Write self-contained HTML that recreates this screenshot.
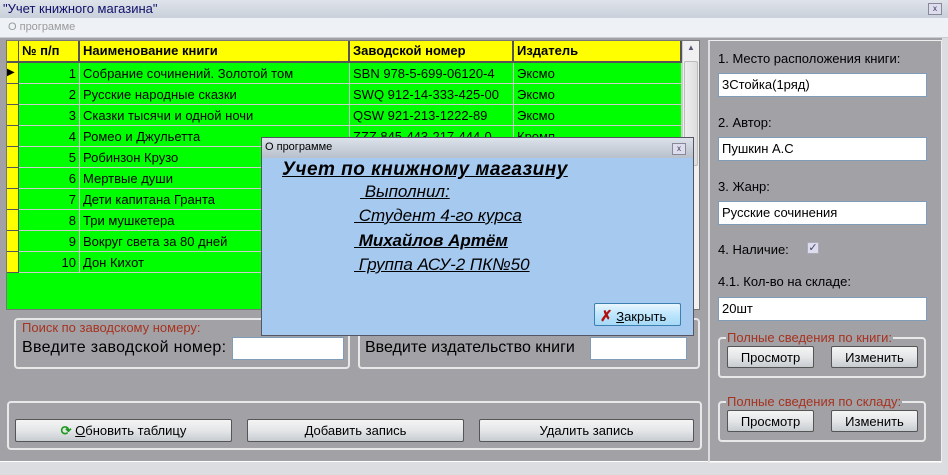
<!DOCTYPE html>
<html><head><meta charset="utf-8"><style>
*{margin:0;padding:0;box-sizing:border-box}
body{width:948px;height:475px;position:relative;overflow:hidden;background:#a2a1a6;font-family:"Liberation Sans",sans-serif;font-size:13px;color:#000}
.a{position:absolute}
.title{left:0;top:0;width:948px;height:18px;background:linear-gradient(#dfe3ea,#c9d0da);color:#10106a;font-size:13px;padding:1px 3px}
.menu{left:0;top:18px;width:948px;height:20px;background:#eef1f6;color:#9a9a9a;font-size:11px;padding:3px 8px;border-bottom:1px solid #c8ccd3}
.grid{left:6px;top:40px;width:694px;height:270px;background:#00ff00;border:1px solid #777}
.hdr{background:#ffff00;font-weight:bold;font-size:13px;border-right:2px solid #555;border-bottom:2px solid #555;height:22px;padding:2px 3px}
.cell{height:21px;border-right:1px solid #ccc;border-bottom:1px solid #ccc;padding:3px 3px;font-size:13px;white-space:nowrap;overflow:hidden}
.ind{background:#ffff00;border-right:1px solid #555;border-bottom:1px solid #555;height:21px}
.gb{border:2px solid #e8e8e8;border-radius:4px}
.leg{color:#a63320;font-size:13px;background:#a2a1a6;padding:0 1px}
.inp{background:#fff;border:1px solid #7f9db9;height:24px;padding:3px 3px;font-size:13px}
.btn{border:1px solid #555;border-radius:2px;background:linear-gradient(#f4f4f4,#e4e6e8 50%,#c7ccd1);text-align:center;font-size:13px;padding-top:3px}
.dl{font-size:17px;font-style:italic;text-decoration:underline;white-space:nowrap}
</style></head><body>
<div class="a title">"Учет книжного магазина"</div>
<div class="a" style="left:928px;top:3px;width:14px;height:12px;border:1px solid #889;background:#dde;font-size:8px;text-align:center;color:#335;line-height:10px">x</div>
<div class="a menu">О программе</div>

<div class="a grid">
 <div class="a" style="left:0;top:0;width:12px;height:22px;background:#ffff00;border-right:1px solid #555;border-bottom:2px solid #555"></div>
 <div class="a hdr" style="left:12px;top:0;width:61px">№ п/п</div>
 <div class="a hdr" style="left:73px;top:0;width:270px">Наименование книги</div>
 <div class="a hdr" style="left:343px;top:0;width:164px">Заводской номер</div>
 <div class="a hdr" style="left:507px;top:0;width:168px">Издатель</div>
 <div class="a" style="left:675px;top:0;width:17px;height:268px;background:#f0f0f0;border-left:1px solid #ccc"><div style="margin:20px 1px;height:105px;border:1px solid #bbb;border-radius:2px;background:linear-gradient(90deg,#eee,#ddd)"></div><div class="a" style="left:4px;top:2px;font-size:8px;color:#557">▲</div><div class="a" style="left:4px;top:254px;font-size:8px;color:#557">▼</div></div>
 <div id="rows" class="a" style="left:0;top:22px"></div>
</div>

<div class="a gb" style="left:14px;top:318px;width:336px;height:51px"></div>
<div class="a leg" style="left:21px;top:320px">Поиск по заводскому номеру:</div>
<div class="a" style="left:22px;top:339px;font-size:16px;letter-spacing:0.3px">Введите заводской номер:</div>
<div class="a inp" style="left:232px;top:337px;width:112px;height:23px"></div>
<div class="a gb" style="left:358px;top:318px;width:342px;height:51px"></div>
<div class="a" style="left:365px;top:339px;font-size:16px">Введите издательство книги</div>
<div class="a inp" style="left:590px;top:337px;width:97px;height:23px"></div>

<div class="a gb" style="left:7px;top:401px;width:695px;height:49px"></div>
<div class="a btn" style="left:15px;top:419px;width:217px;height:23px"><span style="color:#1a9a1a;font-weight:bold">⟳</span> <u>О</u>бновить таблицу</div>
<div class="a btn" style="left:247px;top:419px;width:217px;height:23px">Добавить запись</div>
<div class="a btn" style="left:479px;top:419px;width:215px;height:23px">Удалить запись</div>
<div class="a" style="left:0;top:461px;width:948px;height:14px;background:#dcdde1;border-top:1px solid #fff"></div>

<div class="a" style="left:708px;top:40px;width:234px;height:423px;border:1px solid #eee;border-left:2px solid #ddd"></div>
<div class="a" style="left:942px;top:38px;width:6px;height:425px;background:#dcdde1"></div>
<div class="a" style="left:718px;top:51px;font-size:13px">1. Место расположения книги:</div>
<div class="a inp" style="left:718px;top:73px;width:209px">3Стойка(1ряд)</div>
<div class="a" style="left:718px;top:115px">2. Автор:</div>
<div class="a inp" style="left:718px;top:137px;width:209px">Пушкин А.С</div>
<div class="a" style="left:718px;top:179px">3. Жанр:</div>
<div class="a inp" style="left:718px;top:201px;width:209px">Русские сочинения</div>
<div class="a" style="left:718px;top:242px">4. Наличие:</div>
<div class="a" style="left:807px;top:242px;width:12px;height:12px;background:#dde;border:1px solid #aab;color:#446;font-size:11px;line-height:10px;text-align:center">✓</div>
<div class="a" style="left:718px;top:274px">4.1. Кол-во на складе:</div>
<div class="a inp" style="left:718px;top:297px;width:209px">20шт</div>
<div class="a gb" style="left:718px;top:337px;width:208px;height:41px"></div>
<div class="a leg" style="left:726px;top:330px">Полные сведения по книги:</div>
<div class="a btn" style="left:727px;top:346px;width:87px;height:22px">Просмотр</div>
<div class="a btn" style="left:831px;top:346px;width:87px;height:22px">Изменить</div>
<div class="a gb" style="left:718px;top:401px;width:208px;height:41px"></div>
<div class="a leg" style="left:726px;top:394px">Полные сведения по складу:</div>
<div class="a btn" style="left:727px;top:410px;width:87px;height:22px">Просмотр</div>
<div class="a btn" style="left:831px;top:410px;width:87px;height:22px">Изменить</div>

<div class="a" style="left:261px;top:137px;width:433px;height:199px;background:#a6c9ef;border:1px solid #556">
 <div style="height:20px;background:linear-gradient(#dde2ea,#b7c0cc);padding:3px 3px;font-size:11px">О программе</div>
 <div class="a" style="left:410px;top:5px;width:14px;height:12px;border:1px solid #889;background:#dde;font-size:8px;text-align:center;color:#335;line-height:10px">x</div>
 <div class="a dl" style="left:20px;top:21px;font-size:19px;font-weight:bold;letter-spacing:0.5px">Учет по книжному магазину</div>
 <div class="a dl" style="left:98px;top:44px">&nbsp;Выполнил:</div>
 <div class="a dl" style="left:92px;top:68px">&nbsp;Студент 4-го курса</div>
 <div class="a dl" style="left:92px;top:93px;font-weight:bold">&nbsp;Михайлов Артём</div>
 <div class="a dl" style="left:92px;top:117px">&nbsp;Группа АСУ-2 ПК№50</div>
 <div class="a" style="left:332px;top:165px;width:87px;height:23px;border:1px solid #3c7fb1;border-radius:2px;background:linear-gradient(#eaf6fd,#bee6fd 50%,#a7d9f5);font-size:13px;padding:3px 0 0 5px"><span style="color:#b01010;font-weight:bold;font-size:15px">✗</span> <u>З</u>акрыть</div>
</div>
<script>
var d=[["1","Собрание сочинений. Золотой том","SBN 978-5-699-06120-4","Эксмо"],["2","Русские народные сказки","SWQ 912-14-333-425-00","Эксмо"],["3","Сказки тысячи и одной ночи","QSW 921-213-1222-89","Эксмо"],["4","Ромео и Джульетта","ZZZ 845-443-217-444-0","Кромп"],["5","Робинзон Крузо","",""],["6","Мертвые души","",""],["7","Дети капитана Гранта","",""],["8","Три мушкетера","",""],["9","Вокруг света за 80 дней","",""],["10","Дон Кихот","",""]];
var h="";d.forEach(function(r,i){var t=i*21;h+='<div class="a ind" style="left:0;top:'+t+'px;width:12px">'+(i==0?'<span style="font-size:10px">▶</span>':'')+'</div>'+
'<div class="a cell" style="left:12px;top:'+t+'px;width:61px;text-align:right">'+r[0]+'</div>'+
'<div class="a cell" style="left:73px;top:'+t+'px;width:270px">'+r[1]+'</div>'+
'<div class="a cell" style="left:343px;top:'+t+'px;width:164px">'+r[2]+'</div>'+
'<div class="a cell" style="left:507px;top:'+t+'px;width:168px">'+r[3]+'</div>';});
document.getElementById("rows").innerHTML=h;
</script>
</body></html>
